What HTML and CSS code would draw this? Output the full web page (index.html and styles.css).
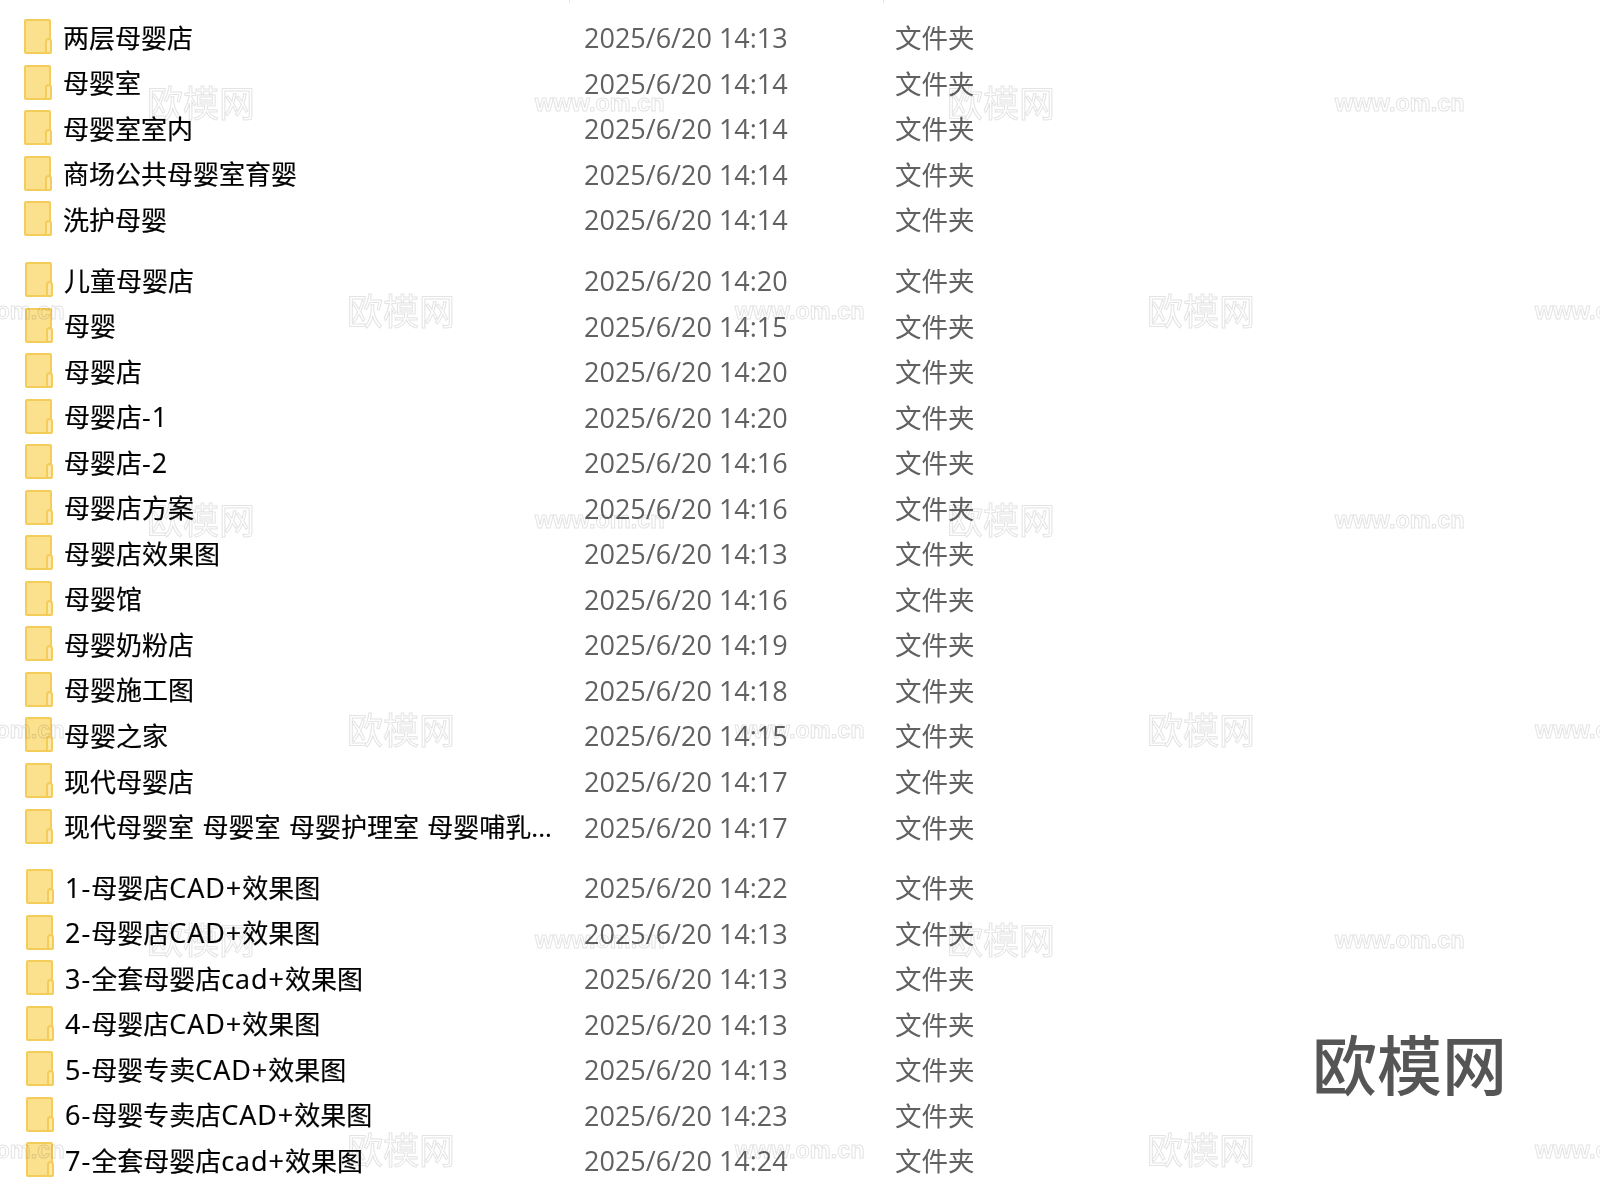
FILE: index.html
```html
<!DOCTYPE html>
<html lang="zh-CN">

<head>
    <meta charset="UTF-8">
    <title>母婴店</title>
    <link rel="stylesheet" href="styles.css">
</head>

<body>
    <svg class="defs" width="0" height="0">
        <symbol id="folder" viewBox="0 0 28 35">
            <rect x="1" y="1" width="25" height="33" rx="1" fill="#fbe08e" stroke="#f3cc5a" stroke-width="2"/>
            <path d="M22 34v-11.5a2.5 2.5 0 0 1 5 0V33a1 1 0 0 1-1 1z" fill="#fde7a4" stroke="#f3cc5a" stroke-width="2"/>
        </symbol>
    </svg>

    <div class="ticks"><span></span><span></span></div>

    <div class="list">
        <div class="group group-a">
            <div class="row"><svg class="folder"><use href="#folder"/></svg><span class="name">两层母婴店</span><span class="date">2025/6/20 14:13</span><span class="type">文件夹</span></div>
            <div class="row"><svg class="folder"><use href="#folder"/></svg><span class="name">母婴室</span><span class="date">2025/6/20 14:14</span><span class="type">文件夹</span></div>
            <div class="row"><svg class="folder"><use href="#folder"/></svg><span class="name">母婴室室内</span><span class="date">2025/6/20 14:14</span><span class="type">文件夹</span></div>
            <div class="row"><svg class="folder"><use href="#folder"/></svg><span class="name">商场公共母婴室育婴</span><span class="date">2025/6/20 14:14</span><span class="type">文件夹</span></div>
            <div class="row"><svg class="folder"><use href="#folder"/></svg><span class="name">洗护母婴</span><span class="date">2025/6/20 14:14</span><span class="type">文件夹</span></div>
        </div>

        <div class="group group-b">
            <div class="row"><svg class="folder"><use href="#folder"/></svg><span class="name">儿童母婴店</span><span class="date">2025/6/20 14:20</span><span class="type">文件夹</span></div>
            <div class="row"><svg class="folder"><use href="#folder"/></svg><span class="name">母婴</span><span class="date">2025/6/20 14:15</span><span class="type">文件夹</span></div>
            <div class="row"><svg class="folder"><use href="#folder"/></svg><span class="name">母婴店</span><span class="date">2025/6/20 14:20</span><span class="type">文件夹</span></div>
            <div class="row"><svg class="folder"><use href="#folder"/></svg><span class="name">母婴店<span class="lat">-1</span></span><span class="date">2025/6/20 14:20</span><span class="type">文件夹</span></div>
            <div class="row"><svg class="folder"><use href="#folder"/></svg><span class="name">母婴店<span class="lat">-2</span></span><span class="date">2025/6/20 14:16</span><span class="type">文件夹</span></div>
            <div class="row"><svg class="folder"><use href="#folder"/></svg><span class="name">母婴店方案</span><span class="date">2025/6/20 14:16</span><span class="type">文件夹</span></div>
            <div class="row"><svg class="folder"><use href="#folder"/></svg><span class="name">母婴店效果图</span><span class="date">2025/6/20 14:13</span><span class="type">文件夹</span></div>
            <div class="row"><svg class="folder"><use href="#folder"/></svg><span class="name">母婴馆</span><span class="date">2025/6/20 14:16</span><span class="type">文件夹</span></div>
            <div class="row"><svg class="folder"><use href="#folder"/></svg><span class="name">母婴奶粉店</span><span class="date">2025/6/20 14:19</span><span class="type">文件夹</span></div>
            <div class="row"><svg class="folder"><use href="#folder"/></svg><span class="name">母婴施工图</span><span class="date">2025/6/20 14:18</span><span class="type">文件夹</span></div>
            <div class="row"><svg class="folder"><use href="#folder"/></svg><span class="name">母婴之家</span><span class="date">2025/6/20 14:15</span><span class="type">文件夹</span></div>
            <div class="row"><svg class="folder"><use href="#folder"/></svg><span class="name">现代母婴店</span><span class="date">2025/6/20 14:17</span><span class="type">文件夹</span></div>
            <div class="row"><svg class="folder"><use href="#folder"/></svg><span class="name name-long">现代母婴室 母婴室 母婴护理室 母婴哺乳...</span><span class="date">2025/6/20 14:17</span><span class="type">文件夹</span></div>
        </div>

        <div class="group group-c">
            <div class="row"><svg class="folder"><use href="#folder"/></svg><span class="name"><span class="lat">1-</span>母婴店<span class="lat">CAD+</span>效果图</span><span class="date">2025/6/20 14:22</span><span class="type">文件夹</span></div>
            <div class="row"><svg class="folder"><use href="#folder"/></svg><span class="name"><span class="lat">2-</span>母婴店<span class="lat">CAD+</span>效果图</span><span class="date">2025/6/20 14:13</span><span class="type">文件夹</span></div>
            <div class="row"><svg class="folder"><use href="#folder"/></svg><span class="name"><span class="lat">3-</span>全套母婴店<span class="lat">cad+</span>效果图</span><span class="date">2025/6/20 14:13</span><span class="type">文件夹</span></div>
            <div class="row"><svg class="folder"><use href="#folder"/></svg><span class="name"><span class="lat">4-</span>母婴店<span class="lat">CAD+</span>效果图</span><span class="date">2025/6/20 14:13</span><span class="type">文件夹</span></div>
            <div class="row"><svg class="folder"><use href="#folder"/></svg><span class="name"><span class="lat">5-</span>母婴专卖<span class="lat">CAD+</span>效果图</span><span class="date">2025/6/20 14:13</span><span class="type">文件夹</span></div>
            <div class="row"><svg class="folder"><use href="#folder"/></svg><span class="name"><span class="lat">6-</span>母婴专卖店<span class="lat">CAD+</span>效果图</span><span class="date">2025/6/20 14:23</span><span class="type">文件夹</span></div>
            <div class="row"><svg class="folder"><use href="#folder"/></svg><span class="name"><span class="lat">7-</span>全套母婴店<span class="lat">cad+</span>效果图</span><span class="date">2025/6/20 14:24</span><span class="type">文件夹</span></div>
        </div>
    </div>

    <div class="marks">
        <div class="mark-row mark-row-odd"><span class="cn">欧模网</span><span class="url">www.om.cn</span><span class="cn">欧模网</span><span class="url">www.om.cn</span></div>
        <div class="mark-row mark-row-even"><span class="url">www.om.cn</span><span class="cn">欧模网</span><span class="url">www.om.cn</span><span class="cn">欧模网</span><span class="url">www.om.cn</span></div>
        <div class="mark-row mark-row-odd"><span class="cn">欧模网</span><span class="url">www.om.cn</span><span class="cn">欧模网</span><span class="url">www.om.cn</span></div>
        <div class="mark-row mark-row-even"><span class="url">www.om.cn</span><span class="cn">欧模网</span><span class="url">www.om.cn</span><span class="cn">欧模网</span><span class="url">www.om.cn</span></div>
        <div class="mark-row mark-row-odd"><span class="cn">欧模网</span><span class="url">www.om.cn</span><span class="cn">欧模网</span><span class="url">www.om.cn</span></div>
        <div class="mark-row mark-row-even"><span class="url">www.om.cn</span><span class="cn">欧模网</span><span class="url">www.om.cn</span><span class="cn">欧模网</span><span class="url">www.om.cn</span></div>
    </div>

    <div class="logo">欧模网</div>
</body>

</html>
```

FILE: styles.css
```css
html,
body {
    margin: 0;
    height: 1200px;
    overflow: hidden;
    background: #fff;
}

body {
    position: relative;
    font-family: "Open Sans", "Noto Sans CJK SC", sans-serif;
}

.defs {
    position: absolute;
}

.ticks {
    display: flex;
    height: 3px;
    padding-left: 569px;
    gap: 313px;
}

.ticks span {
    width: 1px;
    background: #e5e5e5;
}

.list {
    display: flex;
    flex-direction: column;
    gap: 15px;
    padding-top: 11px;
    filter: blur(0.35px);
}

.group-a {
    padding-left: 24px;
}

.group-b {
    padding-left: 25px;
}

.group-c {
    padding-left: 26px;
}

.row {
    display: flex;
    align-items: center;
    height: 45.55px;
}

.folder {
    flex: none;
    width: 28px;
    height: 35px;
}

.name,
.date,
.type {
    white-space: nowrap;
}

.name {
    width: 521px;
    margin-left: 11px;
    font-size: 26px;
    color: #000;
    -webkit-text-stroke: 0.2px #000;
}

.group-b .name {
    width: 520px;
}

.group-c .name {
    width: 519px;
}

.name-long {
    word-spacing: 1.7px;
}

.lat {
    font-size: 27px;
    letter-spacing: 1px;
}

.date {
    width: 311px;
    padding-top: 2px;
    font-size: 27px;
    color: #616161;
}

.type {
    font-size: 26.5px;
    color: #616161;
}

/* tiled watermark, multiplied so the list text stays dark under it */
.marks {
    position: absolute;
    inset: 0;
    overflow: hidden;
    pointer-events: none;
    mix-blend-mode: multiply;
}

.mark-row {
    position: absolute;
    left: 0;
    display: flex;
    align-items: center;
    height: 40px;
}

.mark-row:nth-child(1) { top: 83px; }
.mark-row:nth-child(2) { top: 291px; }
.mark-row:nth-child(3) { top: 500px; }
.mark-row:nth-child(4) { top: 710px; }
.mark-row:nth-child(5) { top: 920px; }
.mark-row:nth-child(6) { top: 1130px; }

.mark-row-odd {
    left: 147px;
}

.mark-row-even {
    left: -65px;
}

.mark-row span {
    flex: none;
    color: transparent;
    -webkit-text-stroke: 1px #e4e4e4;
    white-space: nowrap;
}

.mark-row .cn {
    width: 107px;
    margin-right: 281px;
    margin-bottom: 4px;
    font-size: 36px;
}

.mark-row .url {
    width: 130px;
    margin-right: 282px;
    font-family: "Liberation Sans", sans-serif;
    font-size: 23.5px;
    font-weight: bold;
}

.logo {
    position: absolute;
    left: 1312px;
    top: 1017px;
    font-family: "Noto Sans CJK SC", sans-serif;
    font-size: 65px;
    font-weight: 500;
    line-height: 90px;
    color: #555;
}
```
